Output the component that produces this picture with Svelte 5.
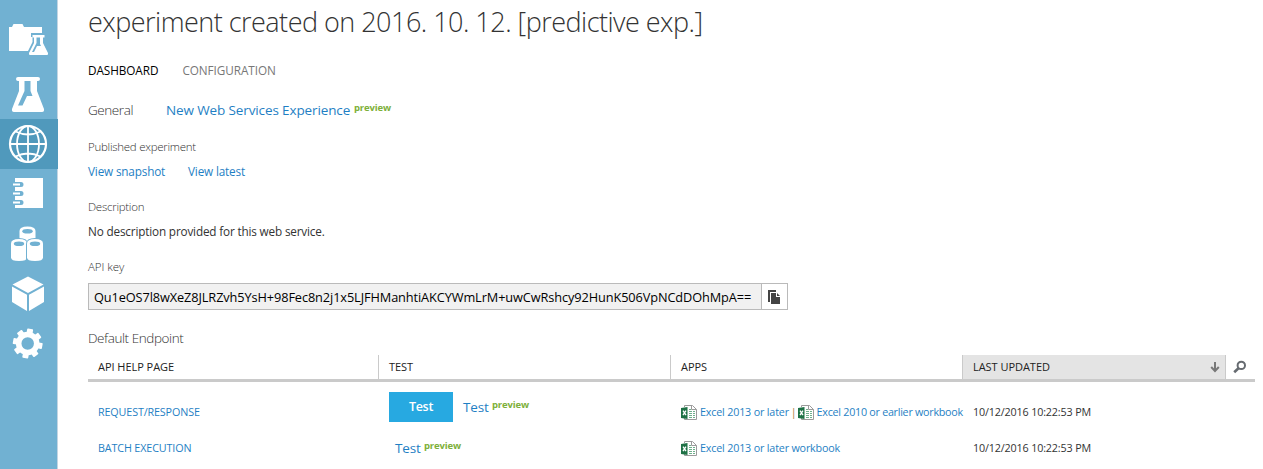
<script>
  const nav = ['projects', 'experiments', 'services', 'notebooks', 'datasets', 'models', 'settings'];
  const active = 'services';
  const apiKey = 'Qu1eOS7l8wXeZ8JLRZvh5YsH+98Fec8n2j1x5LJFHManhtiAKCYWmLrM+uwCwRshcy92HunK506VpNCdDOhMpA==';
  const updated = '10/12/2016 10:22:53 PM';
  const teeth = [0, 45, 90, 135, 180, 225, 270, 315];
</script>

{#snippet excel()}
  <svg class="excel" width="17" height="17" viewBox="0 0 17 17">
    <path d="M3.5 3V1.5h8l4 4v10h-12V14" fill="#fff" stroke="#9b9b9b" />
    <path d="M10.5 1.5v4h5" fill="none" stroke="#9b9b9b" />
    <path d="M8 5.5h2M8 7.5h3m1 0h2M8 9.5h3m1 0h2M8 11.5h3m1 0h2M8 13.5h3m1 0h2" stroke="#6fb08c" />
    <path d="M0 4l6.500-1v12L0 14z" fill="#1e7145" />
    <path d="M2 6.6l3 4.6M5 6.6l-3 4.6" stroke="#fff" stroke-width="1.3" />
  </svg>
{/snippet}

<div class="page">
  <nav>
    {#each nav as item}
      <div class="item" class:active={item === active}>
        <svg width="58" height="50" viewBox="0 0 58 50" fill="#fff">
          {#if item === 'projects'}
            <path d="M9 32V8h3l1.500-3h9l1.500 3h18v6H31v4h1.500v5L28 32z" />
            <path d="M32.500 16h12v2.500H43V24l5 10q.5 2-1 2H30q-1.500 0-1-2l5-10v-5.500h-1.500z" />
            <path d="M36.500 18.500h3.500V25l1 2h-4l-3 6h-2l4.500-9z" fill="#71b1d2" />
          {:else if item === 'experiments'}
            <path d="M18 8h20q2 0 2 2t-2 2h-1v10l7 18q.5 3-2 3H14q-2.500 0-2-3l7-18V12h-1q-2 0-2-2t2-2z" />
            <path d="M24.500 12h6v10l2 5h-5.500l-4.500 9.500H18L24.500 22z" fill="#71b1d2" />
          {:else if item === 'services'}
            <g fill="none" stroke="#fff" stroke-width="2.200">
              <circle cx="28" cy="25" r="18" />
              <ellipse cx="28" cy="25" rx="11" ry="18" stroke-width="1.800" />
              <path d="M28 7v36M10 25h36M15.500 12.500q12.500 6 25 0M15.500 37.500q12.500-6 25 0" stroke-width="1.800" />
            </g>
          {:else if item === 'notebooks'}
            <path d="M15 9h28v30H15v-3h6q2.500 0 2.500-2.500T21 31h-6v-4h6q2.500 0 2.500-2.500T21 22h-6v-4h6q2.500 0 2.500-2.500T21 13h-6z" />
            <path d="M13 15.500h7M13 24.500h7M13 33.500h7" stroke="#fff" stroke-width="2" />
          {:else if item === 'datasets'}
            {#each [[19.5, 7.5], [11, 20], [27, 20]] as [x, y]}
              <g transform="translate({x} {y})">
                <path d="M-1 5Q-1-1 8-1T17 5v17.500H-1z" fill="#71b1d2" />
                <path d="M0 4.500Q0 0 8 0t8 4.500v14q0 3.500-8 3.500t-8-3.500z" />
                <ellipse cx="8" cy="4.700" rx="5.200" ry="2.300" fill="#71b1d2" />
              </g>
            {/each}
          {:else if item === 'models'}
            <path d="M28 7.500L43.500 15.500 28 24 12.500 15.500zM12 17.500l15 8.300V42L12 33zM44 17.500l-15 8.300V42l15-9z" />
          {:else}
            <g transform="translate(27.700 24.500)">
              <circle r="9" fill="none" stroke="#fff" stroke-width="5.500" />
              {#each teeth as t}
                <rect x="-3" y="-14.800" width="6" height="5" rx=".8" transform="rotate({t + 10})" />
              {/each}
            </g>
          {/if}
        </svg>
      </div>
    {/each}
  </nav>

  <main>
    <h1>experiment created on 2016. 10. 12. [predictive exp.]</h1>
    <div class="tabs">
      <span class="current">DASHBOARD</span><span class="other">CONFIGURATION</span>
    </div>
    <div class="general">
      <span class="medium">General</span>
      <a class="experience">New Web Services Experience</a><span class="preview">preview</span>
    </div>
    <div class="label published">Published experiment</div>
    <div class="views"><a class="snap">View snapshot</a><a>View latest</a></div>
    <div class="label description">Description</div>
    <div class="value">No description provided for this web service.</div>
    <div class="label key-label">API key</div>
    <div class="key">
      <div class="key-text">{apiKey}</div>
      <div class="copy">
        <svg width="14" height="16" viewBox="0 0 14 16">
          <path d="M1 13V1h8v2H3v10z" fill="#444" />
          <path d="M4 4h5v4h4v7H4z" fill="#444" />
          <path d="M10 4l3 3h-3z" fill="#444" />
        </svg>
      </div>
    </div>
    <div class="medium endpoint">Default Endpoint</div>

    <div class="grid head">
      <div>API HELP PAGE</div>
      <div>TEST</div>
      <div>APPS</div>
      <div class="sorted">
        LAST UPDATED
        <svg width="10" height="12" viewBox="0 0 10 12" fill="none" stroke="#777" stroke-width="2">
          <path d="M5 1v9M1.200 6L5 10l3.800-4" />
        </svg>
      </div>
      <div class="search">
        <svg width="14" height="14" viewBox="0 0 14 14" fill="none" stroke="#666b70">
          <circle cx="8.300" cy="5.400" r="3.700" stroke-width="2" />
          <path d="M5.500 8.200L1.200 12.300" stroke-width="2.600" />
        </svg>
      </div>
    </div>
    <div class="grid row first">
      <div><a class="caps">REQUEST/RESPONSE</a></div>
      <div class="test">
        <button>Test</button><a class="try">Test</a><span class="preview">preview</span>
      </div>
      <div class="apps">
        {@render excel()}<a>Excel 2013 or later</a><i>|</i>{@render excel()}<a class="tight">Excel 2010 or earlier workbook</a>
      </div>
      <div>{updated}</div>
    </div>
    <div class="grid row">
      <div><a class="caps">BATCH EXECUTION</a></div>
      <div class="test second"><a class="try">Test</a><span class="preview">preview</span></div>
      <div class="apps">{@render excel()}<a>Excel 2013 or later workbook</a></div>
      <div>{updated}</div>
    </div>
  </main>
</div>

<style>
  :global(body) { background: #fff; overflow: hidden; }
  .page {
    display: flex;
    width: 1263px;
    height: 469px;
    overflow: hidden;
    font-family: "Open Sans", "Noto Sans", sans-serif;
    font-size: 11.75px;
    letter-spacing: -.17px;
    color: #333;
    white-space: nowrap;
  }
  a { color: #1f7fc4; }
  nav {
    flex: none;
    box-sizing: border-box;
    width: 58px;
    padding-top: 19px;
    background: linear-gradient(90deg, #71b1d2 57px, #c3d5e3 57px);
  }
  .item { height: 50px; }
  .item.active { background: #5099bc; }
  .item svg { display: block; }
  main { width: 1167px; margin-left: 30px; }
  h1 {
    margin: 0;
    height: 42px;
    line-height: 44px;
    font-size: 27px;
    font-weight: 300;
    letter-spacing: -.52px;
  }
  .tabs {
    display: flex;
    gap: 24px;
    margin-top: 18px;
    line-height: 20px;
    letter-spacing: -.07px;
  }
  .current { color: #000; }
  .other { color: #777; }
  .general { display: flex; margin-top: 20px; height: 20px; line-height: 20px; }
  .medium { font-size: 13.5px; font-weight: 300; letter-spacing: -.43px; }
  .general .medium { width: 78px; }
  .experience { width: 188px; font-size: 13.5px; letter-spacing: -.12px; }
  .preview {
    font-size: 9.5px;
    font-weight: 700;
    line-height: 16px;
    letter-spacing: -.14px;
    color: #7db03a;
  }
  .label { font-size: 11.5px; font-weight: 300; letter-spacing: -.27px; line-height: 20px; }
  .published { margin-top: 17px; }
  .views { display: flex; margin-top: 4px; line-height: 20px; }
  .snap { width: 100px; }
  .description { margin-top: 16px; }
  .value { margin-top: 4px; line-height: 20px; }
  .key-label { margin-top: 16px; letter-spacing: -.05px; }
  .key {
    display: flex;
    box-sizing: border-box;
    width: 700px;
    height: 27px;
    margin-top: 6px;
    border: 1px solid #bababa;
  }
  .key-text {
    box-sizing: border-box;
    width: 673px;
    padding-left: 5px;
    background: #f1f1f1;
    border-right: 1px solid #bababa;
    color: #000;
    font-size: 12.75px;
    line-height: 27px;
    letter-spacing: -.1px;
  }
  .copy { flex: 1; display: flex; align-items: center; justify-content: center; padding-right: 2px; }
  .endpoint { margin-top: 18px; line-height: 20px; }
  .grid { display: grid; grid-template-columns: 290px 292px 292px 264px 29px; }
  .head {
    margin-top: 7px;
    height: 24px;
    border-bottom: 3px solid #cacaca;
    font-size: 11px;
    line-height: 24px;
    letter-spacing: -.04px;
    color: #222;
  }
  .head > div { box-sizing: border-box; padding-left: 10px; border-right: 1px solid #cacaca; }
  .head > div:first-child { width: 291px; }
  .head > div:nth-child(2) { width: 293px; padding-left: 11px; }
  .head > div:nth-child(3) { width: 293px; padding-left: 11px; }
  .head > div.sorted {
    display: flex;
    align-items: center;
    justify-content: space-between;
    margin-left: 1px;
    padding: 0 5px 0 10px;
    background: #e4e4e4;
  }
  .head > div.search { display: flex; align-items: center; padding-left: 7px; border: 0; }
  .row {
    grid-template-rows: 36px;
    height: 36px;
    align-items: center;
    font-size: 10.75px;
    letter-spacing: -.15px;
  }
  .row.first { margin-top: 12px; }
  .row > div { padding-left: 11px; line-height: 20px; min-width: 0; }
  .row > div:first-child { padding-left: 10px; }
  .caps { letter-spacing: -.13px; }
  .row .test { display: flex; }
  .first .test { align-items: center; margin-bottom: 10px; }
  .row .second { padding-left: 17px; }
  button {
    width: 64px;
    height: 30px;
    margin-right: 10px;
    padding: 0;
    border: 0;
    background: #27a9e1;
    color: #fff;
    font: 600 12.5px/30px "Open Sans", sans-serif;
    letter-spacing: -.3px;
  }
  .try { width: 29px; font-size: 13.5px; letter-spacing: -.15px; }
  .first .test .preview { margin-top: -4px; }
  .row .apps { display: flex; align-items: center; margin-right: -1px; letter-spacing: -.18px; }
  .apps a { margin-left: 2px; }
  .apps .tight { letter-spacing: -.27px; }
  .apps i { font-style: normal; margin: 0 1px 0 2px; color: #a67b45; }
  .excel { flex: none; }
</style>
